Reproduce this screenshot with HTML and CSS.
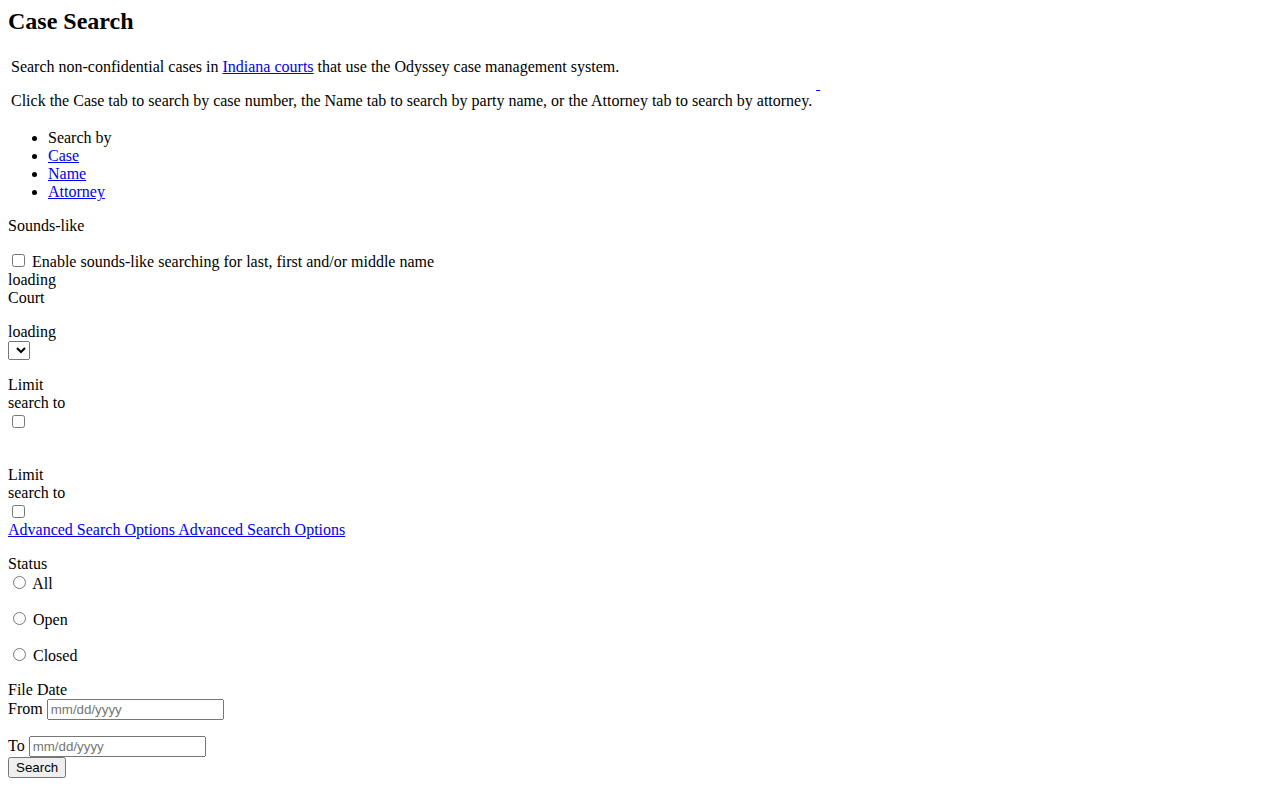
FILE: index.html
```html
<!DOCTYPE html>
<html lang="en">
<head>
<meta charset="utf-8">
<title>Case Search</title>
<link rel="stylesheet" href="styles.css">
</head>
<body>
<h1 class="page-title">Case Search</h1>

<div class="intro">
  <div class="intro-text">
    <p class="intro-line">Search non-confidential cases in <a class="link" href="#">Indiana courts</a> that use the Odyssey case management system.</p>
    <p class="intro-line last">Click the Case tab to search by case number, the Name tab to search by party name, or the Attorney tab to search by attorney.</p>
  </div>
  <div class="intro-aside"><a class="link" href="#">&nbsp;</a></div>
</div>

<ul class="tabs">
  <li>Search by</li>
  <li><a class="link" href="#">Case</a></li>
  <li><a class="link" href="#">Name</a></li>
  <li><a class="link" href="#">Attorney</a></li>
</ul>

<p class="field-title">Sounds-like</p>
<div class="check-line"><input class="check" type="checkbox" id="soundslike"> <label for="soundslike">Enable sounds-like searching for last, first and/or middle name</label></div>
<div class="plain">loading</div>
<p class="field-title">Court</p>
<div class="plain">loading</div>
<div class="select-line"><select class="court-select"></select></div>

<div class="limit-group first">
  <label class="limit-label">Limit search to</label>
  <div class="check-line"><input class="check" type="checkbox"></div>
</div>

<div class="limit-group">
  <label class="limit-label">Limit search to</label>
  <div class="check-line"><input class="check" type="checkbox"></div>
</div>

<div class="advanced-line"><a class="link" href="#"><span>Advanced Search Options</span> <span>Advanced Search Options</span></a></div>

<div class="status">
  <div class="plain">Status</div>
  <div class="radio-line"><input class="radio" type="radio" name="status" id="st-all"> <label for="st-all">All</label></div>
  <div class="radio-line"><input class="radio" type="radio" name="status" id="st-open"> <label for="st-open">Open</label></div>
  <div class="radio-line"><input class="radio" type="radio" name="status" id="st-closed"> <label for="st-closed">Closed</label></div>
</div>

<div class="file-date">
  <div class="plain">File Date</div>
  <div class="date-line from"><label for="date-from">From</label><input class="date-input" type="text" id="date-from" placeholder="mm/dd/yyyy"></div>
  <div class="date-line"><label for="date-to">To</label><input class="date-input" type="text" id="date-to" placeholder="mm/dd/yyyy"></div>
  <button class="search-btn" type="button">Search</button>
</div>
</body>
</html>
```

FILE: styles.css
```css
html, body {
  background: #ffffff;
}

body {
  margin: 8px;
  font-family: "Liberation Serif", "Times New Roman", serif;
  font-size: 16px;
  color: #000000;
}

.link {
  color: #0000ee;
  text-decoration: underline;
}

.page-title {
  font-size: 24px;
  font-weight: bold;
  margin: 0 0 19.92px 0;
}

.intro {
  display: flex;
  align-items: center;
  gap: 2px;
  padding: 2px;
}

.intro-text,
.intro-aside {
  padding: 1px;
}

.intro-line {
  margin: 0 0 16px 0;
}

.intro-line.last {
  margin-bottom: 0;
}

.tabs {
  margin: 16px 0;
  padding-left: 40px;
}

.field-title {
  margin: 0 0 16px 0;
}

.plain {
  margin: 0;
}

.check-line {
  margin: 0;
}

.select-line {
  margin: 0 0 16px 0;
}

.court-select,
.date-input,
.search-btn {
  font-family: "Liberation Sans", Arial, sans-serif;
  font-size: 13.333px;
}

.limit-group {
  margin: 0;
}

.limit-group .check-line {
  height: 19px;
}

.limit-group.first {
  margin-bottom: 35px;
}

.limit-label {
  display: block;
  width: 60px;
}

.advanced-line {
  margin: 0 0 16px 0;
}

.radio-line {
  margin: 0 0 16px 0;
}

.date-line {
  display: flex;
  align-items: center;
  gap: 4px;
  margin: 0;
}

.date-line.from {
  margin-bottom: 16px;
}

.date-input {
  box-sizing: border-box;
  width: 177px;
  height: 21px;
}

.search-btn {
  display: block;
  box-sizing: border-box;
  height: 21px;
  padding: 0 6px;
  line-height: 17px;
}
```
